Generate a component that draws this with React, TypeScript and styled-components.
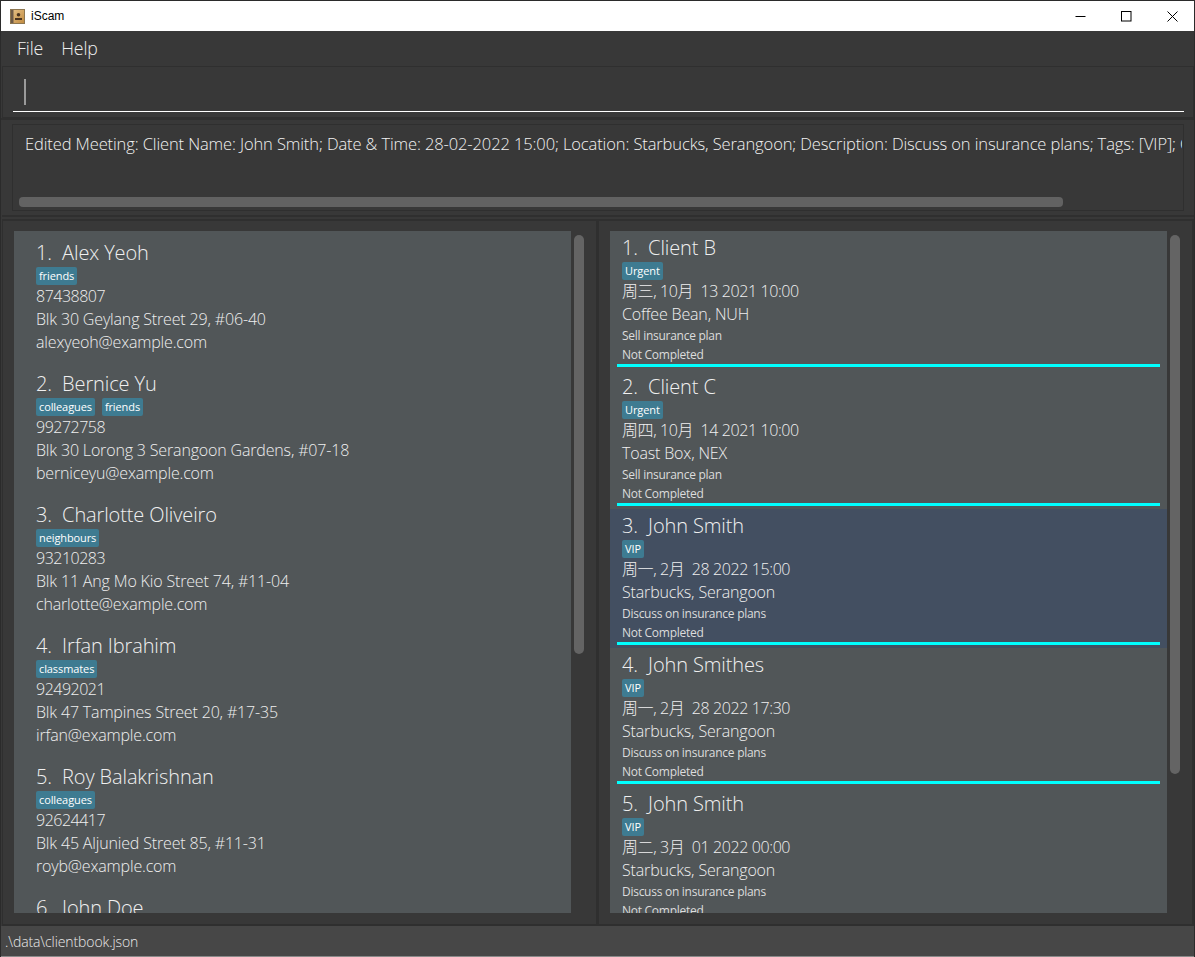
import React from "react";
import styled, { createGlobalStyle } from "styled-components";

const Global = createGlobalStyle`
  html, body { margin: 0; padding: 0; background: #383838; }
  #root { width: 1195px; height: 957px; overflow: hidden; }
  * { box-sizing: border-box; }
`;

const FONT = `"Open Sans", "Noto Sans CJK SC", sans-serif`;

const Win = styled.div`
  width: 1195px; height: 957px; display: flex; flex-direction: column;
  background: #383838; border-left: 1px solid #2b2b2b; border-right: 1px solid #2b2b2b;
  border-top: 1px solid #2b2b2b; font-family: ${FONT}; color: #fff; overflow: hidden;
`;
const TitleBar = styled.div`
  height: 30px; flex: none; background: #fff; display: flex; align-items: center; padding-left: 9px;
`;
const AppIcon = styled.svg`width: 15px; height: 15px; flex: none;`;
const TitleText = styled.span`
  margin-left: 6px; font: 12px "Liberation Sans", sans-serif; color: #000; flex: 1;
`;
const WinButton = styled.div`
  width: 46px; height: 30px; padding-left: 2px; display: flex; align-items: center; justify-content: center;
`;
const MenuBar = styled.div`
  height: 35px; flex: none; display: flex; padding: 0 0 2px 16px; gap: 18px; align-items: center;
  font-size: 17.7px; font-weight: 300; color: #f0f0f0; letter-spacing: -0.1px;
`;
const CommandPane = styled.div`
  height: 52px; flex: none; margin-left: 1px; border: 1px solid #2f2f2f;
  padding: 12px 9px 0 10px;
`;
const CommandField = styled.div`
  height: 33px; border-bottom: 1px solid #fff; padding: 0 0 0 11px;
`;
const Caret = styled.div`
  width: 2px; height: 26px; background: #9a9a9a;
`;
const Gap = styled.div`height: 2px; flex: none; background: #2f2f2f;`;
const ResultPane = styled.div`
  height: 97px; flex: none; margin-left: 1px; padding: 4px 10px 6px 10px; border-bottom: 2px solid #2f2f2f;
`;
const ResultBox = styled.div`
  height: 87px; border: 1px solid #2f2f2f; padding: 8px 1px 0 6px; display: flex; flex-direction: column; overflow: hidden;
`;
const ResultText = styled.div`
  height: 64px; padding: 0 0 0 6px; font-size: 16.5px; font-weight: 300; white-space: nowrap; overflow: hidden;
  line-height: 22px; color: #f2f2f2; letter-spacing: -0.115px;
`;
const HBar = styled.div`
  height: 10px; width: 1044px; flex: none; border-radius: 4px; background: #626262;
`;
const Lists = styled.div`
  height: 707px; flex: none; margin: 2px 0 0 1px; display: flex; border-left: 1px solid #2f2f2f;
  border-bottom: 2px solid #2f2f2f; border-right: 2px solid #2f2f2f; border-top: 2px solid #2f2f2f;
`;
const Split = styled.div`width: 3px; flex: none; background: #2f2f2f;`;
const Pane = styled.div`
  flex: 1; min-width: 0; display: flex; padding: 10px 0 10px 11px; overflow: hidden;
`;
const Cards = styled.div`
  width: 557px; height: 682px; flex: none; overflow: hidden; background: #515658;
`;
const Track = styled.div`width: 16px; flex: none; padding: 4px 3px;`;
const Thumb = styled.div<{ $h: number }>`
  width: 10px; height: ${(p) => p.$h}px; border-radius: 5px; background: #646464;
`;
const PersonCard = styled.div`
  height: 131px; padding: 8px 0 0 22px;
`;
const Name = styled.div`
  font-size: 20px; font-weight: 300; line-height: 28px; color: #f0f0f0; white-space: pre; letter-spacing: -0.12px;
`;
const Tags = styled.div`display: flex; gap: 7px; height: 18px;`;
const Tag = styled.span`
  height: 18px; padding: 0 3px; border-radius: 2px; background: #3e7b91; color: #fff;
  font-size: 11px; line-height: 18px; letter-spacing: -0.1px;
`;
const Line = styled.div<{ $digits?: boolean }>`
  font-size: 16px; font-weight: 300; line-height: 23px; color: #efefef; white-space: pre;
  letter-spacing: ${(p) => (p.$digits ? "-0.5px" : "-0.16px")};
`;
const MeetingCard = styled.div<{ $sel?: boolean }>`
  height: 139px; padding: 3px 7px 0 12px; display: flex; flex-direction: column;
  background: ${(p) => (p.$sel ? "#434f61" : "transparent")};
`;
const MeetingName = styled(Name)``;
const Small = styled.div`
  font-size: 12px; line-height: 19px; font-weight: 400; color: #dcdcdc; letter-spacing: -0.27px;
`;
const MeetingDate = styled.div`
  font-size: 16px; font-weight: 300; line-height: 23px; color: #f0f0f0; white-space: pre; letter-spacing: -0.4px;
`;
const MeetingPlace = styled(MeetingDate)`letter-spacing: -0.16px;`;
const Rule = styled.div`height: 3px; margin: 0 0 0 -5px; background: #00ffff; flex: none;`;
const StatusBar = styled.div`
  flex: 1; background: #474747; padding: 6px 0 0 4px; font-size: 14px; font-weight: 300; color: #eaeaea;
  letter-spacing: -0.1px; border-bottom: 1px solid #8a8a8a;
`;

const persons = [
  { n: "1.  Alex Yeoh", t: ["friends"], p: "87438807", a: "Blk 30 Geylang Street 29, #06-40", e: "alexyeoh@example.com" },
  { n: "2.  Bernice Yu", t: ["colleagues", "friends"], p: "99272758", a: "Blk 30 Lorong 3 Serangoon Gardens, #07-18", e: "berniceyu@example.com" },
  { n: "3.  Charlotte Oliveiro", t: ["neighbours"], p: "93210283", a: "Blk 11 Ang Mo Kio Street 74, #11-04", e: "charlotte@example.com" },
  { n: "4.  Irfan Ibrahim", t: ["classmates"], p: "92492021", a: "Blk 47 Tampines Street 20, #17-35", e: "irfan@example.com" },
  { n: "5.  Roy Balakrishnan", t: ["colleagues"], p: "92624417", a: "Blk 45 Aljunied Street 85, #11-31", e: "royb@example.com" },
  { n: "6.  John Doe", t: [], p: "", a: "", e: "" },
];
const meetings = [
  { n: "1.  Client B", t: "Urgent", d: "周三, 10月  13 2021 10:00", l: "Coffee Bean, NUH", x: "Sell insurance plan" },
  { n: "2.  Client C", t: "Urgent", d: "周四, 10月  14 2021 10:00", l: "Toast Box, NEX", x: "Sell insurance plan" },
  { n: "3.  John Smith", t: "VIP", d: "周一, 2月  28 2022 15:00", l: "Starbucks, Serangoon", x: "Discuss on insurance plans", sel: true },
  { n: "4.  John Smithes", t: "VIP", d: "周一, 2月  28 2022 17:30", l: "Starbucks, Serangoon", x: "Discuss on insurance plans" },
  { n: "5.  John Smith", t: "VIP", d: "周二, 3月  01 2022 00:00", l: "Starbucks, Serangoon", x: "Discuss on insurance plans" },
];

export default function App() {
  return (
    <Win>
      <Global />
      <TitleBar>
        <AppIcon viewBox="0 0 15 15">
          <defs>
            <linearGradient id="ic" x1="0" y1="0" x2="1" y2="1">
              <stop offset="0" stopColor="#e8c48c" />
              <stop offset="1" stopColor="#c08a3e" />
            </linearGradient>
          </defs>
          <rect x="0.5" y="0.5" width="14" height="14" fill="url(#ic)" stroke="#8d7650" />
          <rect x="1" y="1" width="2.5" height="13" fill="#6d5a48" />
          <circle cx="8.5" cy="5.8" r="1.8" fill="#4a3420" />
          <rect x="5" y="9" width="7" height="2" fill="#4a3420" />
        </AppIcon>
        <TitleText>iScam</TitleText>
        <WinButton>
          <svg width="11" height="11" viewBox="0 0 11 11"><path d="M0.5 5.5H10.5" stroke="#000" fill="none" /></svg>
        </WinButton>
        <WinButton>
          <svg width="11" height="11" viewBox="0 0 11 11"><rect x="0.5" y="0.5" width="9.5" height="9.5" stroke="#000" fill="none" /></svg>
        </WinButton>
        <WinButton>
          <svg width="11" height="11" viewBox="0 0 11 11"><path d="M0.5 0.5L10.5 10.5M10.5 0.5L0.5 10.5" stroke="#000" fill="none" /></svg>
        </WinButton>
      </TitleBar>
      <MenuBar>
        <span>File</span>
        <span>Help</span>
      </MenuBar>
      <CommandPane>
        <CommandField><Caret /></CommandField>
      </CommandPane>
      <Gap />
      <ResultPane>
        <ResultBox>
          <ResultText>Edited Meeting: Client Name: John Smith; Date &amp; Time: 28-02-2022 15:00; Location: Starbucks, Serangoon; Description: Discuss on insurance plans; Tags: [VIP]; Completed: false</ResultText>
          <HBar />
        </ResultBox>
      </ResultPane>
      <Lists>
        <Pane>
          <Cards>
            {persons.map((p) => (
              <PersonCard key={p.n}>
                <Name>{p.n}</Name>
                <Tags>{p.t.map((t) => <Tag key={t}>{t}</Tag>)}</Tags>
                <Line $digits>{p.p}</Line>
                <Line>{p.a}</Line>
                <Line>{p.e}</Line>
              </PersonCard>
            ))}
          </Cards>
          <Track><Thumb $h={419} /></Track>
        </Pane>
        <Split />
        <Pane>
          <Cards>
            {meetings.map((m) => (
              <MeetingCard key={m.n} $sel={m.sel}>
                <MeetingName>{m.n}</MeetingName>
                <Tags><Tag>{m.t}</Tag></Tags>
                <MeetingDate>{m.d}</MeetingDate>
                <MeetingPlace>{m.l}</MeetingPlace>
                <Small>{m.x}</Small>
                <Small>Not Completed</Small>
                <Rule />
              </MeetingCard>
            ))}
          </Cards>
          <Track><Thumb $h={539} /></Track>
        </Pane>
      </Lists>
      <StatusBar>.\data\clientbook.json</StatusBar>
    </Win>
  );
}
